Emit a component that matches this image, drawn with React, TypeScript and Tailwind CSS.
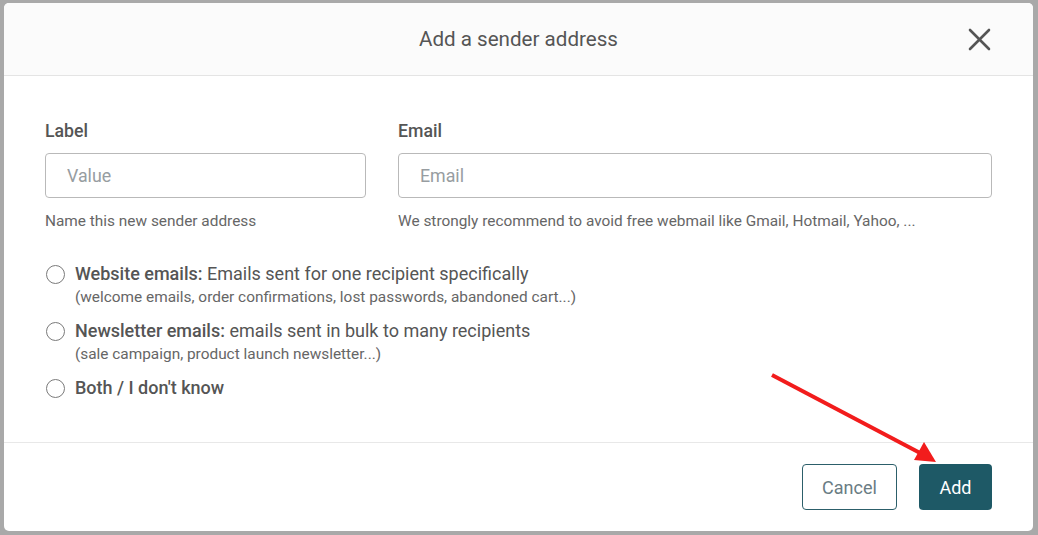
const options = [
  {
    title: 'Website emails:',
    text: ' Emails sent for one recipient specifically',
    sub: '(welcome emails, order confirmations, lost passwords, abandoned cart...)',
  },
  {
    title: 'Newsletter emails:',
    text: ' emails sent in bulk to many recipients',
    sub: '(sale campaign, product launch newsletter...)',
  },
  { title: "Both / I don't know", text: '', sub: '' },
];

function Field({
  label,
  placeholder,
  help,
  className,
}: {
  label: string;
  placeholder: string;
  help: string;
  className: string;
}) {
  return (
    <div className={className}>
      <p className="text-[17.7px] font-medium leading-6 text-[#555]">{label}</p>
      <input
        placeholder={placeholder}
        className="mt-[10px] h-[45px] w-full rounded-[4px] border border-[#b9b9b9] px-[21px] text-[17.8px] text-[#555] outline-none placeholder:text-[#979da1]"
      />
      <p className="mt-[13px] text-[15.4px] leading-5 text-[#666]">{help}</p>
    </div>
  );
}

export default function App() {
  return (
    <div className="relative h-[535px] w-[1038px] bg-[#a9a9a9] pl-[4px] pt-[3px] font-['Roboto',sans-serif]">
      <div className="flex h-[528px] w-[1029px] flex-col overflow-hidden rounded-[5px] bg-white">
        <header className="relative flex h-[73px] shrink-0 items-center justify-center border-b border-[#e4e4e4] bg-[#fbfbfb]">
          <h2 className="text-[20.6px] font-normal text-[#555]">Add a sender address</h2>
          <button className="absolute right-[42px] top-[25px] text-[#555]">
            <svg width="23" height="23" viewBox="0 0 23 23" fill="none" stroke="currentColor" strokeWidth="2.6" strokeLinecap="round">
              <line x1="2" y1="2" x2="21" y2="21" />
              <line x1="21" y1="2" x2="2" y2="21" />
            </svg>
          </button>
        </header>

        <div className="flex-1 border-b border-[#e8e8e8] px-[41px] pt-[43px]">
          <div className="flex gap-[32px]">
            <Field
              className="w-[321px]"
              label="Label"
              placeholder="Value"
              help="Name this new sender address"
            />
            <Field
              className="w-[594px]"
              label="Email"
              placeholder="Email"
              help="We strongly recommend to avoid free webmail like Gmail, Hotmail, Yahoo, ..."
            />
          </div>

          <div className="mt-[31px] flex flex-col gap-[11px]">
            {options.map((o) => (
              <label key={o.title} className="flex items-start gap-[10px]">
                <span className="mt-[3px] ml-[1px] h-[19px] w-[19px] shrink-0 rounded-full border-[1.5px] border-[#7a7a7a]" />
                <span>
                  <span className="block text-[18px] leading-6 text-[#555]">
                    <span className="font-medium">{o.title}</span>
                    {o.text}
                  </span>
                  {o.sub && (
                    <span className="block text-[15.4px] leading-[22px] text-[#666]">{o.sub}</span>
                  )}
                </span>
              </label>
            ))}
          </div>
        </div>

        <footer className="flex h-[88px] shrink-0 items-center justify-end gap-[22px] px-[41px]">
          <button className="h-[46px] w-[95px] rounded-[4px] border border-[#2c5f6a] text-[18px] text-[#6a7c83]">
            Cancel
          </button>
          <button className="h-[46px] w-[73px] rounded-[4px] bg-[#1e5966] text-[18px] text-white">
            Add
          </button>
        </footer>
      </div>

      <svg className="pointer-events-none absolute left-0 top-0" width="1038" height="535">
        <line x1="772" y1="375" x2="922" y2="454" stroke="#f21c1c" strokeWidth="4" />
        <polygon points="936,462 914,460 924,442" fill="#f21c1c" />
      </svg>
    </div>
  );
}
